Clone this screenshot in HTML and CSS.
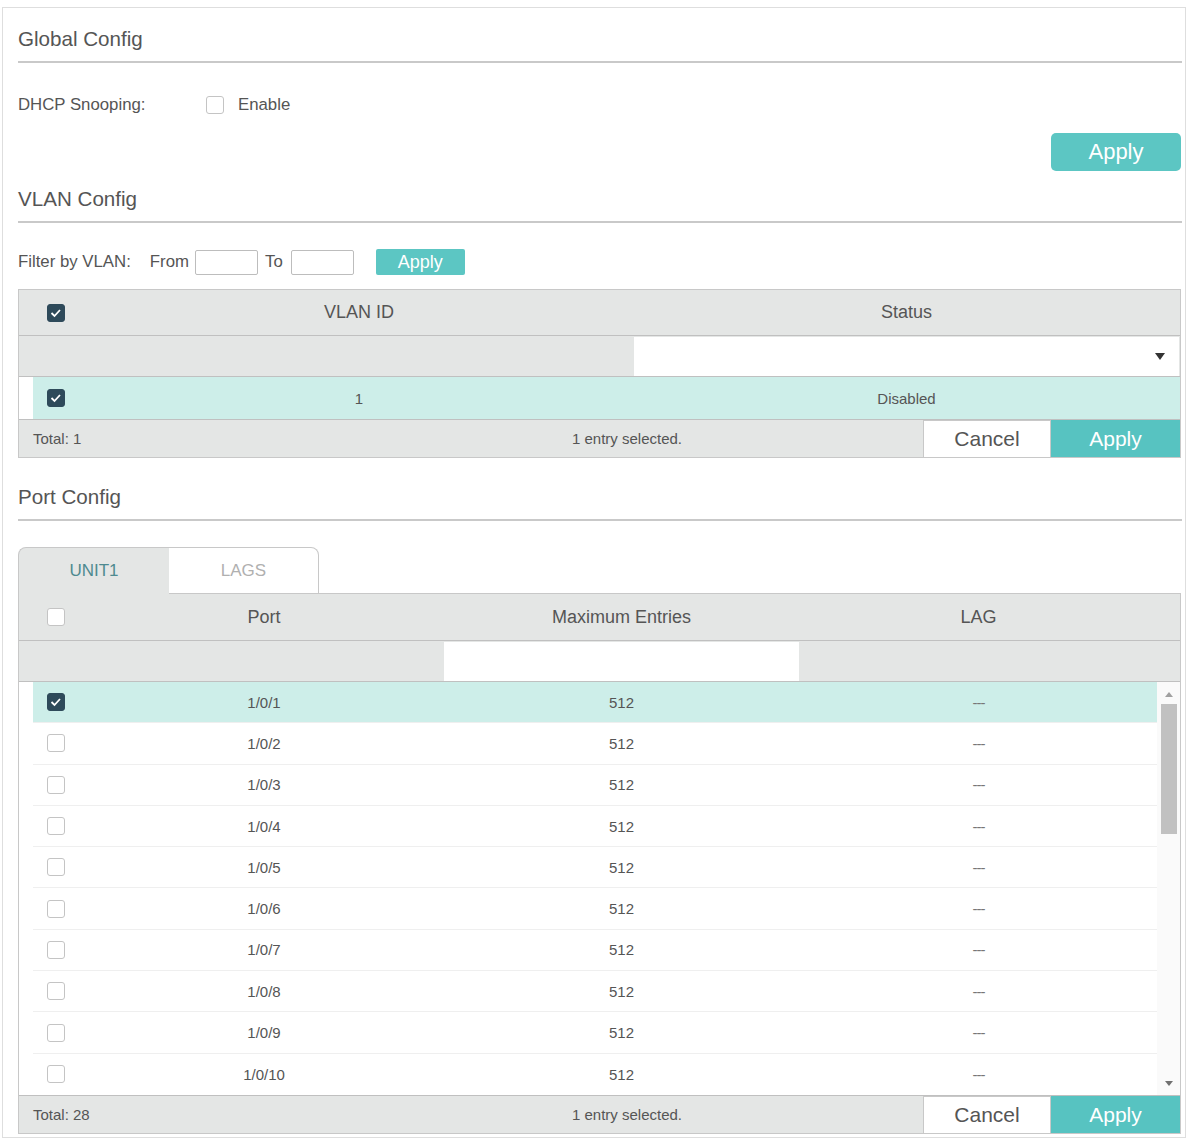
FILE: index.html
```html
<!DOCTYPE html>
<html lang="en">
<head>
    <meta charset="UTF-8">
    <meta name="viewport" content="width=device-width, initial-scale=1.0">
    <title>DHCP Snooping</title>
    <link rel="stylesheet" href="styles.css">
</head>
<body>
    <div class="panel">
        <!-- Global Config -->
        <div class="section-title">Global Config</div>

        <div class="option-row">
            <span class="option-label">DHCP Snooping:</span>
            <span class="check"></span>
            <span class="check-text">Enable</span>
        </div>

        <div class="apply-row">
            <button class="btn-apply big">Apply</button>
        </div>

        <!-- VLAN Config -->
        <div class="section-title gap-small">VLAN Config</div>

        <div class="filter-row">
            <span>Filter by VLAN:</span>
            <span class="from-label">From</span>
            <input type="text" class="vlan-input">
            <span class="to-label">To</span>
            <input type="text" class="vlan-input">
            <button class="btn-apply small">Apply</button>
        </div>

        <div class="grid-table vlan-table">
            <div class="t-head vlan-cols">
                <div class="cell-check"><span class="check checked"></span></div>
                <div>VLAN ID</div>
                <div>Status</div>
            </div>
            <div class="t-filter vlan-cols">
                <div></div>
                <div></div>
                <div class="select-box"><span class="caret"></span></div>
            </div>
            <div class="t-row selected vlan-row-cols">
                <div class="cell-check"><span class="check checked"></span></div>
                <div>1</div>
                <div>Disabled</div>
            </div>
            <div class="t-foot">
                <div class="foot-total">Total: 1</div>
                <div class="foot-info">1 entry selected.</div>
                <button class="btn-cancel">Cancel</button>
                <button class="btn-foot-apply">Apply</button>
            </div>
        </div>

        <!-- Port Config -->
        <div class="section-title gap-large">Port Config</div>

        <div class="tabs">
            <div class="tab active">UNIT1</div>
            <div class="tab">LAGS</div>
            <div class="tab-fill"></div>
        </div>

        <div class="grid-table port-table">
            <div class="t-head port-cols">
                <div class="cell-check"><span class="check"></span></div>
                <div>Port</div>
                <div>Maximum Entries</div>
                <div>LAG</div>
                <div></div>
            </div>
            <div class="t-filter port-cols">
                <div></div>
                <div></div>
                <div class="input-box"></div>
                <div></div>
                <div></div>
            </div>
            <div class="port-body">
                <div class="port-rows">
                    <div class="t-row selected port-row-cols">
                        <div class="cell-check"><span class="check checked"></span></div>
                        <div>1/0/1</div><div>512</div><div class="dash">---</div>
                    </div>
                    <div class="t-row port-row-cols">
                        <div class="cell-check"><span class="check"></span></div>
                        <div>1/0/2</div><div>512</div><div class="dash">---</div>
                    </div>
                    <div class="t-row port-row-cols">
                        <div class="cell-check"><span class="check"></span></div>
                        <div>1/0/3</div><div>512</div><div class="dash">---</div>
                    </div>
                    <div class="t-row port-row-cols">
                        <div class="cell-check"><span class="check"></span></div>
                        <div>1/0/4</div><div>512</div><div class="dash">---</div>
                    </div>
                    <div class="t-row port-row-cols">
                        <div class="cell-check"><span class="check"></span></div>
                        <div>1/0/5</div><div>512</div><div class="dash">---</div>
                    </div>
                    <div class="t-row port-row-cols">
                        <div class="cell-check"><span class="check"></span></div>
                        <div>1/0/6</div><div>512</div><div class="dash">---</div>
                    </div>
                    <div class="t-row port-row-cols">
                        <div class="cell-check"><span class="check"></span></div>
                        <div>1/0/7</div><div>512</div><div class="dash">---</div>
                    </div>
                    <div class="t-row port-row-cols">
                        <div class="cell-check"><span class="check"></span></div>
                        <div>1/0/8</div><div>512</div><div class="dash">---</div>
                    </div>
                    <div class="t-row port-row-cols">
                        <div class="cell-check"><span class="check"></span></div>
                        <div>1/0/9</div><div>512</div><div class="dash">---</div>
                    </div>
                    <div class="t-row port-row-cols last">
                        <div class="cell-check"><span class="check"></span></div>
                        <div>1/0/10</div><div>512</div><div class="dash">---</div>
                    </div>
                </div>
                <div class="scrollbar">
                    <span class="arrow-up"></span>
                    <span class="thumb"></span>
                    <span class="track"></span>
                    <span class="arrow-down"></span>
                </div>
            </div>
            <div class="t-foot">
                <div class="foot-total">Total: 28</div>
                <div class="foot-info">1 entry selected.</div>
                <button class="btn-cancel">Cancel</button>
                <button class="btn-foot-apply">Apply</button>
            </div>
        </div>
    </div>
</body>
</html>
```

FILE: styles.css
```css
* {
    box-sizing: border-box;
}

body {
    margin: 0;
    font-family: "Liberation Sans", Arial, sans-serif;
    color: #555;
    background: #fff;
}

button {
    font-family: inherit;
    cursor: pointer;
}

.panel {
    margin: 7px 3px 0 2px;
    border: 1px solid #dedede;
    padding: 19px 4px 3px 15px;
}

.section-title {
    font-size: 20.6px;
    line-height: 24px;
    padding-bottom: 10px;
    border-bottom: 2px solid #c9c9c9;
    margin-right: -1px;
}

.section-title.gap-small {
    margin-top: 16px;
}

.section-title.gap-large {
    margin-top: 27px;
}

/* global config */
.option-row {
    display: flex;
    align-items: center;
    height: 20px;
    margin-top: 32px;
    font-size: 16.8px;
}

.option-label {
    width: 188px;
}

.check-text {
    margin-left: 14px;
}

.check {
    display: inline-block;
    width: 18px;
    height: 18px;
    border: 1px solid #c4c4c4;
    border-radius: 3px;
    background: #fff;
}

.check.checked {
    border-color: #2e4a5a;
    background: #2e4a5a url("data:image/svg+xml;utf8,<svg xmlns='http://www.w3.org/2000/svg' width='18' height='18' viewBox='0 0 18 18'><polyline points='4.5,9 7.5,12 13,6' fill='none' stroke='white' stroke-width='1.8'/></svg>") center / 18px 18px no-repeat;
}

.apply-row {
    display: flex;
    justify-content: flex-end;
    margin-top: 18px;
}

.btn-apply {
    border: none;
    color: #fff;
    background-color: #5cc6c3;
}

.btn-apply.big {
    width: 130px;
    height: 38px;
    border-radius: 5px;
    font-size: 22px;
}

.btn-apply.small {
    width: 89px;
    height: 26px;
    margin-left: 22px;
    border-radius: 2px;
    font-size: 18px;
}

/* vlan filter */
.filter-row {
    display: flex;
    align-items: center;
    height: 26px;
    margin-top: 26px;
    font-size: 16.8px;
}

.from-label {
    margin-left: 19px;
}

.to-label {
    margin-left: 7px;
}

.vlan-input {
    width: 63px;
    height: 25px;
    margin-left: 6px;
    border: 1px solid #bdbdbd;
    border-radius: 2px;
}

.to-label + .vlan-input {
    margin-left: 8px;
}

/* tables */
.grid-table {
    border: 1px solid #c8c8c8;
}

.vlan-table {
    margin-top: 14px;
}

.t-head {
    display: grid;
    align-items: center;
    height: 46px;
    background: #e4e6e5;
    border-bottom: 1px solid #c0c0c0;
    font-size: 18px;
    text-align: center;
}

.port-table .t-head {
    height: 47px;
}

.t-filter {
    display: grid;
    height: 41px;
    background: #e4e6e5;
    border-bottom: 1px solid #c0c0c0;
}

.vlan-cols {
    grid-template-columns: 66px 548px 1fr;
}

.vlan-row-cols {
    grid-template-columns: 52px 548px 1fr;
}

.port-cols {
    grid-template-columns: 66px 358px 357px 357px 1fr;
}

.port-row-cols {
    grid-template-columns: 52px 358px 357px 357px;
}

.cell-check {
    display: flex;
    text-align: left;
    padding-left: 28px;
}

.t-row .cell-check {
    padding-left: 14px;
}

.select-box {
    display: flex;
    align-items: center;
    justify-content: flex-end;
    margin: 1px 1px 0 1px;
    padding-right: 14px;
    background: #fff;
}

.caret {
    width: 0;
    height: 0;
    border-left: 5px solid transparent;
    border-right: 5px solid transparent;
    border-top: 7px solid #333;
}

.input-box {
    margin: 1px 1px 0 1px;
    background: #fff;
}

.t-row {
    display: grid;
    align-items: center;
    margin-left: 14px;
    height: 42px;
    font-size: 15px;
    text-align: center;
    color: #555;
}

.t-row.selected {
    background: #cdeee9;
}

.dash {
    font-size: 15px;
    letter-spacing: -1px;
    color: #777;
}

.t-foot {
    display: flex;
    align-items: stretch;
    height: 38px;
    border-top: 1px solid #c0c0c0;
    background: #e4e6e5;
    font-size: 15px;
}

.foot-total {
    width: 312px;
    padding-left: 14px;
    display: flex;
    align-items: center;
}

.foot-info {
    flex: 1;
    display: flex;
    align-items: center;
    justify-content: center;
}

.btn-cancel {
    width: 128px;
    border: 1px solid #c8c8c8;
    border-bottom: none;
    background: #fff;
    color: #555;
    font-size: 21px;
}

.btn-foot-apply {
    width: 129px;
    border: none;
    background: #57c3c1;
    color: #fff;
    font-size: 21px;
}

/* tabs */
.tabs {
    display: flex;
    height: 47px;
    margin-top: 26px;
}

.tab {
    display: flex;
    align-items: center;
    justify-content: center;
    width: 150px;
    font-size: 17px;
    color: #b0b0b0;
    background: #fff;
    border: 1px solid #c8c8c8;
    border-left: none;
    border-radius: 0 8px 0 0;
}

.tab.active {
    width: 151px;
    color: #4e8a90;
    background: #e4e6e5;
    border-left: 1px solid #c8c8c8;
    border-right: none;
    border-bottom: none;
    border-radius: 8px 0 0 0;
}

.tab-fill {
    flex: 1;
    border-bottom: 1px solid #c8c8c8;
}

.port-table {
    border-top: none;
}

.port-body {
    display: flex;
    height: 413px;
}

.port-rows {
    flex: 1;
}

.port-rows .t-row {
    height: 41.3px;
    border-bottom: 1px solid #efefef;
}

.port-rows .t-row.last {
    border-bottom: none;
}

.scrollbar {
    width: 24px;
    display: flex;
    flex-direction: column;
    align-items: center;
    padding: 10px 0 9px;
    background: #fafafa;
}

.arrow-up,
.arrow-down {
    width: 0;
    height: 0;
    border-left: 4px solid transparent;
    border-right: 4px solid transparent;
}

.arrow-up {
    border-bottom: 5px solid #a0a0a0;
}

.arrow-down {
    border-top: 5px solid #707070;
}

.thumb {
    width: 16px;
    height: 130px;
    margin-top: 7px;
    background: #c1c1c1;
}

.track {
    flex: 1;
}
```
